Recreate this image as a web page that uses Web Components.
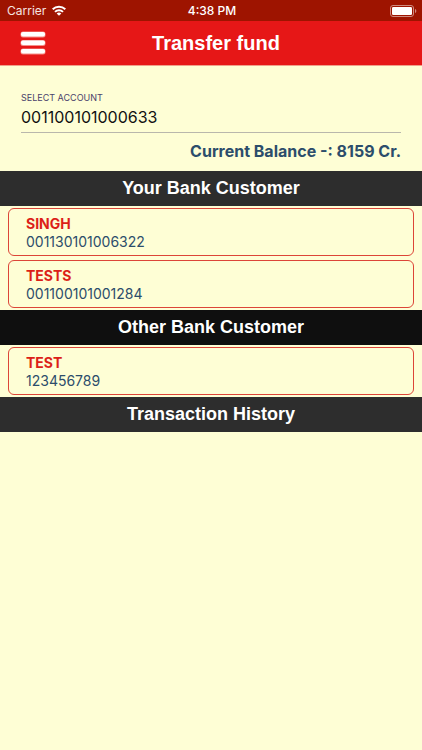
<!DOCTYPE html>
<html lang="en">
<head>
<meta charset="utf-8">
<meta name="viewport" content="width=device-width, initial-scale=1">
<title>Transfer fund</title>
<style>
    body {
        margin: 0;
        min-height: 100vh;
        background: #fefed5;
        font-family: Inter, "Liberation Sans", sans-serif;
        --red: #e61717;
        --navy: #2c4d6b;
        --heading-font: "Liberation Sans", Arial, sans-serif;
    }
</style>
</head>
<body>
    <status-bar carrier="Carrier" time="4:38 PM"></status-bar>
    <app-header>Transfer fund</app-header>
    <main>
        <account-field label="SELECT ACCOUNT" value="001100101000633">Current Balance -: 8159 Cr.</account-field>
        <customer-section heading="Your Bank Customer">
            <customer-card name="SINGH">001130101006322</customer-card>
            <customer-card name="TESTS">001100101001284</customer-card>
        </customer-section>
        <customer-section heading="Other Bank Customer" active>
            <customer-card name="TEST">123456789</customer-card>
        </customer-section>
        <customer-section heading="Transaction History"></customer-section>
    </main>

<script>
class StatusBar extends HTMLElement {
    connectedCallback() {
        this.attachShadow({ mode: 'open' });
        this.shadowRoot.innerHTML = `
            <style>
                :host {
                    display: grid;
                    grid-template-columns: 1fr auto 1fr;
                    align-items: center;
                    height: 21px;
                    padding: 0 5px 0 7px;
                    background: #9e1400;
                    color: #fff;
                    font-size: 12px;
                    line-height: 21px;
                }

                .carrier {
                    display: flex;
                    align-items: center;
                    gap: 6px;
                    color: #f6e4e0;
                }

                .time {
                    font-weight: 500;
                }

                .battery {
                    justify-self: end;
                }

                svg {
                    display: block;
                }
            </style>

            <div class="carrier">
                <span>${this.getAttribute('carrier')}</span>
                <svg width="14" height="11" viewBox="0 0 14 11" fill="none" stroke="#fff" stroke-width="2">
                    <path d="M.7 4.2a9 9 0 0 1 12.6 0"/>
                    <path d="M3 6.9a5.7 5.7 0 0 1 8 0"/>
                    <path d="M7 10.8 4.7 8.6a3.3 3.3 0 0 1 4.6 0z" fill="#fff" stroke="none"/>
                </svg>
            </div>
            <span class="time">${this.getAttribute('time')}</span>
            <svg class="battery" width="27" height="12" viewBox="0 0 27 12">
                <rect x=".5" y=".5" width="23" height="11" rx="2.5" fill="none" stroke="#cf8b80"/>
                <rect x="2" y="2" width="20" height="8" rx="1.2" fill="#fff"/>
                <path d="M25 4v4c.8-.3 1.3-1.1 1.3-2S25.8 4.3 25 4z" fill="#cf8b80"/>
            </svg>
        `;
    }
}

class AppHeader extends HTMLElement {
    connectedCallback() {
        this.attachShadow({ mode: 'open' });
        this.shadowRoot.innerHTML = `
            <style>
                :host {
                    display: grid;
                    grid-template-columns: 66px 1fr 56px;
                    align-items: center;
                    height: 44px;
                    background: var(--red);
                    border-bottom: 1px solid #f0a08a;
                }

                h1 {
                    margin: 0;
                    font: bold 20px/44px var(--heading-font);
                    color: #fff;
                    text-align: center;
                }

                button {
                    justify-self: center;
                    padding: 0;
                    border: 0;
                    background: none;
                    cursor: pointer;
                }

                svg {
                    display: block;
                }
            </style>

            <button type="button" aria-label="Menu">
                <svg width="26" height="24" viewBox="0 0 26 24">
                    <g fill="#f58f88">
                        <rect x=".5" y=".5" width="25" height="6" rx="2.5"/>
                        <rect x=".5" y="9" width="25" height="6" rx="2.5"/>
                        <rect x=".5" y="17.5" width="25" height="6" rx="2.5"/>
                    </g>
                    <g fill="#fff">
                        <rect x="1" y="1" width="24" height="4.5" rx="2"/>
                        <rect x="1" y="9.5" width="24" height="4.5" rx="2"/>
                        <rect x="1" y="18" width="24" height="4.5" rx="2"/>
                    </g>
                </svg>
            </button>
            <h1><slot></slot></h1>
        `;
    }
}

class AccountField extends HTMLElement {
    connectedCallback() {
        this.attachShadow({ mode: 'open' });
        this.shadowRoot.innerHTML = `
            <style>
                :host {
                    display: block;
                    padding: 25px 21px 8px;
                }

                label {
                    display: block;
                    font-size: 9px;
                    line-height: 14px;
                    color: #4a3f6b;
                }

                select {
                    appearance: none;
                    display: block;
                    box-sizing: border-box;
                    width: 100%;
                    height: 28px;
                    padding: 0 0 3px;
                    border: 0;
                    border-bottom: 1px solid #b9b7ac;
                    border-radius: 0;
                    background: none;
                    font: 16px/24px Inter, sans-serif;
                    color: #111;
                }

                p {
                    margin: 6px 0 0;
                    font-size: 16px;
                    font-weight: 700;
                    line-height: 24px;
                    color: var(--navy);
                    text-align: right;
                }
            </style>

            <label for="account">${this.getAttribute('label')}</label>
            <select id="account">
                <option>${this.getAttribute('value')}</option>
            </select>
            <p><slot></slot></p>
        `;
    }
}

class CustomerSection extends HTMLElement {
    connectedCallback() {
        this.attachShadow({ mode: 'open' });
        this.shadowRoot.innerHTML = `
            <style>
                :host {
                    display: block;
                }

                h2 {
                    margin: 0;
                }

                button {
                    display: block;
                    width: 100%;
                    height: 35px;
                    padding: 0;
                    border: 0;
                    background: #2d2d2d;
                    color: #fff;
                    font: bold 18px/35px var(--heading-font);
                    cursor: pointer;
                }

                :host([active]) button {
                    background: #0f0f0f;
                }

                .list {
                    display: grid;
                    gap: 4px;
                    padding: 2px 8px;
                }

                .list[hidden] {
                    display: none;
                }
            </style>

            <h2><button type="button">${this.getAttribute('heading')}</button></h2>
            <div class="list"><slot></slot></div>
        `;

        // Collapse or expand the list under the heading
        const button = this.shadowRoot.querySelector('button');
        const list = this.shadowRoot.querySelector('.list');
        button.addEventListener('click', () => {
            list.hidden = !list.hidden;
        });
    }
}

class CustomerCard extends HTMLElement {
    connectedCallback() {
        this.attachShadow({ mode: 'open' });
        this.shadowRoot.innerHTML = `
            <style>
                :host {
                    display: block;
                }

                button {
                    display: block;
                    box-sizing: border-box;
                    width: 100%;
                    height: 48px;
                    padding: 2px 17px 0;
                    border: 1px solid #dc4538;
                    border-radius: 6px;
                    background: none;
                    font: 14px/18px Inter, sans-serif;
                    color: var(--navy);
                    text-align: left;
                    cursor: pointer;
                }

                span {
                    display: block;
                }

                .name {
                    font-weight: 700;
                    color: #dc1f18;
                }
            </style>

            <button type="button">
                <span class="name">${this.getAttribute('name')}</span>
                <span><slot></slot></span>
            </button>
        `;
    }
}

customElements.define('status-bar', StatusBar);
customElements.define('app-header', AppHeader);
customElements.define('account-field', AccountField);
customElements.define('customer-section', CustomerSection);
customElements.define('customer-card', CustomerCard);
</script>
</body>
</html>
